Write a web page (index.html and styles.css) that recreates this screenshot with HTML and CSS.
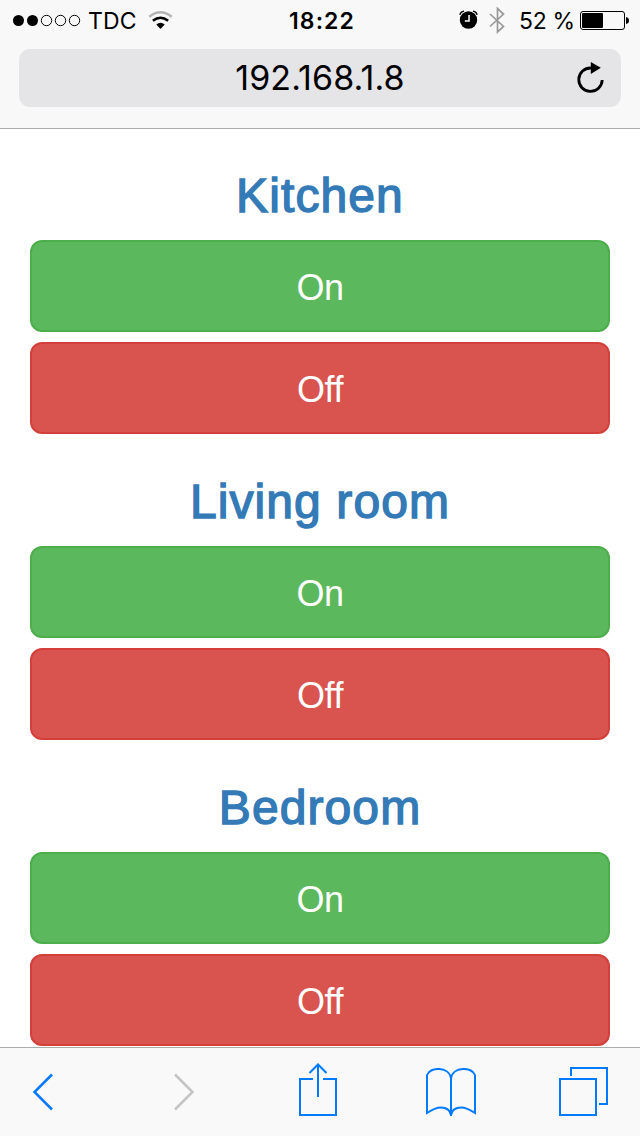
FILE: index.html
```
<!DOCTYPE html>
<html lang="en">
<head>
<meta charset="utf-8">
<title>192.168.1.8</title>
<link rel="stylesheet" href="styles.css">
</head>
<body>
<header class="browser-header">
  <div class="status-bar">
    <div class="status-left">
      <svg class="signal" width="69" height="14" viewBox="0 0 69 14">
        <circle cx="5.500" cy="7.500" r="5.500"/><circle cx="19.500" cy="7.500" r="5.500"/>
        <g fill="none" stroke="#000" stroke-width="1"><circle cx="33.500" cy="7.500" r="5.200"/><circle cx="47.500" cy="7.500" r="5.200"/><circle cx="61.500" cy="7.500" r="5.200"/></g>
      </svg>
      <span class="carrier">TDC</span>
      <svg class="wifi" width="26" height="20" viewBox="0 0 26 20">
        <g fill="none" stroke-width="2.600">
          <path stroke="#b3b3b3" d="M1.300 6.700Q12.500 -2.200 23.700 6.700"/>
          <path stroke="#000" d="M4.900 10.800Q12.500 4.700 20.100 10.800"/>
        </g>
        <path d="M8.300 14.400Q12.500 11 16.700 14.400L12.500 19Z"/>
      </svg>
    </div>
    <span class="clock">18:22</span>
    <div class="status-right">
      <svg class="alarm" width="20" height="20" viewBox="0 0 20 20">
        <circle cx="9.500" cy="10" r="8.700"/>
        <path d="M.9 4.800Q1.500 1.800 5 1.200M18.100 4.800Q17.500 1.800 14 1.200" fill="none" stroke="#000" stroke-width="1.300"/>
        <path d="M10 5V11H5.800" fill="none" stroke="#fff" stroke-width="1.500"/>
      </svg>
      <svg class="bluetooth" width="16" height="28" viewBox="0 0 16 28">
        <path d="M1 8L14.500 20.500L8.500 26V2.500L14.500 8L1 20.500" fill="none" stroke="#999" stroke-width="1.700"/>
      </svg>
      <span class="percent">52 %</span>
      <svg class="battery" width="50" height="20" viewBox="0 0 50 20">
        <rect x=".5" y=".5" width="44" height="18" rx="2.500" fill="none" stroke="#000"/>
        <rect x="2" y="2" width="21" height="15" rx="1"/>
        <path d="M46 6Q49 6.500 49 9.500T46 13Z"/>
      </svg>
    </div>
  </div>
  <div class="address-bar">
    <span class="address">192.168.1.8</span>
    <svg class="reload" width="28" height="32" viewBox="0 0 28 32">
      <path d="M25.200 18A11.700 11.700 0 1 1 14 6" fill="none" stroke="#000" stroke-width="2.800"/>
      <path d="M13.800 0L23.800 5.800L13.800 12Z"/>
    </svg>
  </div>
</header>
<main class="rooms">
  <section class="room"><h2 class="room-name">Kitchen</h2><button class="btn on">On</button><button class="btn off">Off</button></section>
  <section class="room"><h2 class="room-name">Living room</h2><button class="btn on">On</button><button class="btn off">Off</button></section>
  <section class="room"><h2 class="room-name">Bedroom</h2><button class="btn on">On</button><button class="btn off">Off</button></section>
</main>
<footer class="toolbar">
  <svg class="back" width="22" height="38" viewBox="0 0 22 38"><path d="M20 1.500L2.500 19L20 36.500"/></svg>
  <svg class="forward" width="22" height="38" viewBox="0 0 22 38"><path d="M2 1.500L19.500 19L2 36.500"/></svg>
  <svg class="share" width="38" height="54" viewBox="0 0 38 54"><path d="M14 16H1V52H37V16H24M19 34V2M10.500 10L19 1.500L27.500 10"/></svg>
  <svg class="book" width="50" height="50" viewBox="0 0 50 50"><path d="M25 48V10C23 -1.500 4 -1.500 1 7V45C7 41 11 39.500 15 39.500C20 39.500 24 42 25 47C26 42 30 39.500 35 39.500C39 39.500 43 41 49 45V7C46 -1.500 27 -1.500 25 10"/></svg>
  <svg class="tabs" width="50" height="50" viewBox="0 0 50 50"><path d="M1 12H37V48H1ZM12 9V1H48V37H40"/></svg>
</footer>
</body>
</html>
```
FILE: styles.css
```
* { box-sizing: border-box; }
body {
  margin: 0;
  height: 1136px;
  display: flex;
  flex-direction: column;
  overflow: hidden;
  background: #fff;
  color: #000;
  font-family: "Liberation Sans", Arial, sans-serif;
}
svg { display: block; flex: none; }
.browser-header {
  flex: none;
  height: 129px;
  background: #f8f8f8;
  border-bottom: 1px solid #acacac;
  font-family: Inter, sans-serif;
}
.status-bar {
  height: 40px;
  display: grid;
  grid-template-columns: 1fr auto 1fr;
  font-size: 23px;
  line-height: 42px;
  padding: 0 11px 0 13px;
}
.status-left, .status-right { display: flex; align-items: flex-start; white-space: nowrap; }
.status-right { justify-content: flex-end; margin-right: -1px; }
.signal { margin-top: 13px; }
.carrier { margin-left: 6px; width: 48px; letter-spacing: .2px; }
.wifi { margin: 10px 0 0 12px; }
.clock { font-weight: 600; letter-spacing: 1.1px; margin-left: 2px; }
.alarm { margin: 10px 0 0; }
.bluetooth { margin: 6px 0 0 10px; }
.percent { margin-left: 14px; width: 55px; letter-spacing: -.3px; }
.battery { margin: 11px 0 0 6px; }
.address-bar {
  height: 58px;
  margin: 9px 19px 0;
  padding-right: 15px;
  border-radius: 11px;
  background: #e5e5e7;
  display: grid;
  grid-template-columns: 43px 1fr 28px;
  align-items: start;
}
.address {
  grid-column: 2;
  text-align: center;
  font-size: 34px;
  line-height: 58px;
  letter-spacing: .1px;
}
.reload { margin: 13px 0 0 -1px; }
.rooms { flex: 1; min-height: 0; overflow: hidden; padding: 0 30px; }
.room { display: flex; flex-direction: column; }
.room-name {
  margin: 42px 0 18px;
  text-align: center;
  font-size: 48px;
  line-height: 52px;
  font-weight: 400;
  letter-spacing: 1.1px;
  color: #337ab7;
  -webkit-text-stroke: 1.4px #337ab7;
}
.room:first-child .room-name { margin-top: 41px; }
.btn {
  height: 92px;
  padding: 4px 0 0;
  border: 2px solid;
  border-radius: 12px;
  color: #fff;
  font-family: inherit;
  font-size: 36px;
  line-height: 42px;
  letter-spacing: -.4px;
}
.btn.on { background: #5cb85c; border-color: #4cae4c; margin-bottom: 10px; }
.btn.off { background: #d9534f; border-color: #d43f3a; }
.toolbar {
  flex: none;
  height: 89px;
  border-top: 1px solid #acacac;
  background: #f9f9f9;
  display: flex;
  align-items: flex-start;
}
.toolbar path { fill: none; stroke: #007aff; stroke-width: 2; }
.toolbar .back { margin: 25px 0 0 32px; }
.toolbar .forward { margin: 25px 0 0 119px; }
.toolbar .forward path { stroke: #c4c4c4; }
.toolbar .back path, .toolbar .forward path { stroke-width: 2.5; }
.toolbar .share { margin: 15px 0 0 104px; }
.toolbar .book { margin: 20px 0 0 89px; }
.toolbar .tabs { margin: 19px 0 0 83px; }
```
